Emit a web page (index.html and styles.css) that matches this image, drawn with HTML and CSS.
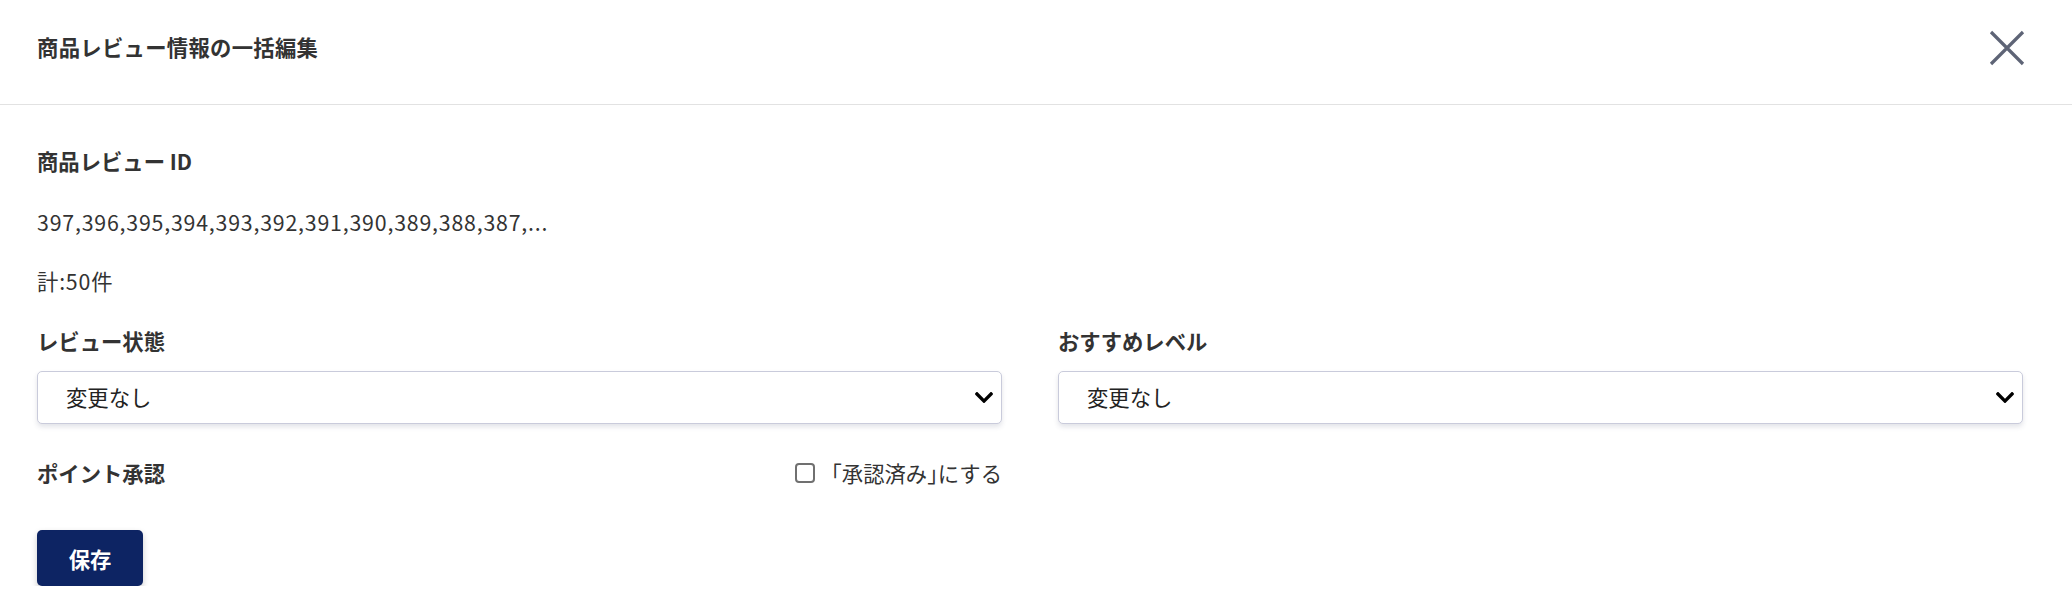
FILE: index.html
```html
<!DOCTYPE html>
<html lang="ja">
<head>
<meta charset="utf-8">
<title>商品レビュー情報の一括編集</title>
<link rel="stylesheet" href="styles.css">
</head>
<body>
<div class="modal">
  <header class="modal-header">
    <h1 class="modal-title">商品レビュー情報の一括編集</h1>
    <button class="close-btn" type="button" aria-label="閉じる">
      <svg width="36" height="36" viewBox="0 0 36 36"><path d="M2 2 L34 34 M34 2 L2 34" stroke="#5e6476" stroke-width="3.2" fill="none"/></svg>
    </button>
  </header>
  <div class="modal-body">
    <div class="field-label">商品レビュー ID</div>
    <p class="text-line">397,396,395,394,393,392,391,390,389,388,387,...</p>
    <p class="text-line">計:50件</p>
    <div class="grid">
      <div class="col">
        <div class="field-label">レビュー状態</div>
        <div class="select">
          <span>変更なし</span>
          <svg class="chevron" width="18" height="11" viewBox="5 123 438 266"><path d="M207.029 381.476L12.686 187.132c-9.373-9.373-9.373-24.569 0-33.941l22.667-22.667c9.357-9.357 24.522-9.375 33.901-.04L224 284.505l154.745-154.021c9.379-9.335 24.544-9.317 33.901.04l22.667 22.667c9.373 9.373 9.373 24.569 0 33.941L240.971 381.476c-9.373 9.372-24.569 9.372-33.942 0z" fill="#000"/></svg>
        </div>
      </div>
      <div class="col">
        <div class="field-label">おすすめレベル</div>
        <div class="select">
          <span>変更なし</span>
          <svg class="chevron" width="18" height="11" viewBox="5 123 438 266"><path d="M207.029 381.476L12.686 187.132c-9.373-9.373-9.373-24.569 0-33.941l22.667-22.667c9.357-9.357 24.522-9.375 33.901-.04L224 284.505l154.745-154.021c9.379-9.335 24.544-9.317 33.901.04l22.667 22.667c9.373 9.373 9.373 24.569 0 33.941L240.971 381.476c-9.373 9.372-24.569 9.372-33.942 0z" fill="#000"/></svg>
        </div>
      </div>
      <div class="col point-row">
        <div class="field-label">ポイント承認</div>
        <label class="check">
          <span class="box"></span>
          <span>「承認済み<span class="half">」</span>にする</span>
        </label>
      </div>
    </div>
    <button class="save-btn" type="button">保存</button>
  </div>
</div>
</body>
</html>
```

FILE: styles.css
```css
* { box-sizing: border-box; }
html, body {
  margin: 0;
  padding: 0;
  background: #ffffff;
}
body {
  font-family: "Noto Sans CJK JP", "Noto Sans", sans-serif;
  font-size: 21.33px;
  line-height: 32px;
  color: #333333;
}
.modal-header {
  display: flex;
  align-items: center;
  justify-content: space-between;
  height: 105px;
  padding: 0 47px 10px 37px;
  border-bottom: 1.5px solid #e2e2e2;
}
.modal-title {
  margin: 0;
  font-size: 21.33px;
  line-height: 32px;
  font-weight: 700;
  letter-spacing: 0.3px;
  color: #333333;
}
.close-btn {
  display: flex;
  padding: 0;
  border: none;
  background: transparent;
  margin-top: 2px;
}
.modal-body {
  padding: 40px 49px 0 37px;
}
.field-label {
  font-weight: 700;
  color: #333333;
  line-height: 32px;
}
.text-line {
  margin: 29px 0 0;
  line-height: 32px;
  letter-spacing: 0.8px;
}
.text-line + .text-line {
  margin-top: 27px;
}
.grid {
  display: grid;
  grid-template-columns: 1fr 1fr;
  column-gap: 56px;
  margin-top: 28px;
}
.col {
  display: flex;
  flex-direction: column;
  gap: 14px;
}
.select {
  display: flex;
  align-items: center;
  justify-content: space-between;
  height: 53px;
  padding: 0 8px 2px 28px;
  border: 1.5px solid #c9cbdb;
  border-radius: 5px;
  background: #ffffff;
  box-shadow: 0 3px 5px rgba(60, 64, 100, 0.14);
  color: #222222;
}
.chevron { margin-top: 2px; }
.point-row {
  flex-direction: row;
  align-items: center;
  justify-content: space-between;
  margin-top: 33px;
}
.check {
  display: flex;
  align-items: center;
  gap: 5px;
  color: #333333;
}
.half {
  font-feature-settings: "halt" 1;
}
.box {
  width: 20px;
  height: 20px;
  border: 2px solid #707070;
  border-radius: 4px;
  background: #ffffff;
}
.save-btn {
  margin-top: 41px;
  width: 106px;
  height: 56px;
  border: none;
  border-radius: 5px;
  background: #0d2463;
  color: #ffffff;
  font-family: "Noto Sans CJK JP", "Noto Sans", sans-serif;
  font-size: 21.33px;
  font-weight: 700;
  box-shadow: 0 3px 6px rgba(0, 0, 0, 0.2);
}
```
